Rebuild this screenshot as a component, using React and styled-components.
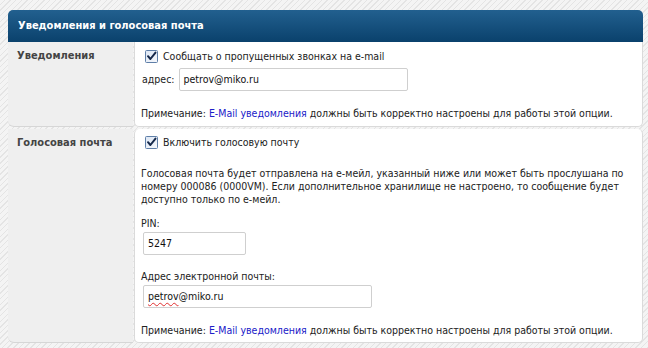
import React from 'react';
import styled, { createGlobalStyle } from 'styled-components';

const GlobalStyle = createGlobalStyle`
  html, body {
    margin: 0;
    padding: 0;
  }
  body {
    width: 648px;
    height: 348px;
    overflow: hidden;
    font-family: "DejaVu Sans Condensed", "DejaVu Sans", sans-serif;
    font-size: 11px;
    color: #222;
    background-color: #f4f4f4;
    background-image: repeating-linear-gradient(
      135deg,
      #f4f4f4 0px,
      #f4f4f4 3px,
      #e4e4e4 3px,
      #e4e4e4 4px
    );
  }
`;

const Page = styled.div`
  padding: 10px 5px 0 8px;
`;

const Header = styled.div`
  height: 32px;
  line-height: 32px;
  padding-left: 10px;
  border-radius: 5px 5px 0 0;
  background: linear-gradient(#22608f, #0a416c);
  color: #fff;
  font-weight: bold;
  font-size: 11px;
`;

const Row = styled.div`
  display: grid;
  grid-template-columns: 125px 1fr;
  column-gap: 1px;
  margin-bottom: 2px;
`;

const LabelCell = styled.div`
  background: #efefef;
  border-bottom: 1px solid #d6d6d6;
  border-radius: 0 0 0 6px;
  padding: 7px 9px;
  font-weight: bold;
  color: #444;
  line-height: 13px;
`;

const ContentCell = styled.div`
  background: #fff;
  border: 1px solid #dadada;
  border-top: none;
  border-radius: ${p => (p.$first ? '0 0 5px 5px' : '5px')};
  padding: ${p => (p.$first ? '7px 6px 6px 6px' : '6px 6px 5px 6px')};
  line-height: 13px;
  font-size: 10.5px;
`;

const CheckLine = styled.label`
  display: flex;
  align-items: center;
  gap: 5px;
  height: 14px;
  padding-left: 4px;
`;

const Box = styled.span`
  display: inline-flex;
  width: 13px;
  height: 13px;
`;

const FieldLine = styled.div`
  display: flex;
  align-items: center;
  gap: 4px;
  margin-top: ${p => p.$mt || 0}px;
`;

const Caption = styled.span`
  padding-left: 1px;
`;

const Field = styled.div`
  box-sizing: border-box;
  width: ${p => p.$w}px;
  height: 23px;
  line-height: 21px;
  padding: 0 4px;
  border: 1px solid #cfcfcf;
  border-radius: 2px;
  background: #fff;
  color: #111;
  margin-top: ${p => p.$mt || 0}px;
  margin-left: ${p => p.$ml || 0}px;
`;

const Misspelled = styled.span`
  text-decoration: underline wavy #e03030;
  text-decoration-thickness: 1px;
  text-underline-offset: 2px;
`;

const Text = styled.div`
  margin-top: ${p => p.$mt || 0}px;
`;

const Link = styled.a`
  color: #2020c8;
  text-decoration: none;
`;

function CheckBox() {
  return (
    <Box>
      <svg width="13" height="13" viewBox="0 0 13 13">
        <defs>
          <linearGradient id="cbg" x1="0" y1="0" x2="1" y2="1">
            <stop offset="0" stopColor="#dce6f4" />
            <stop offset="1" stopColor="#f6f8fc" />
          </linearGradient>
        </defs>
        <rect x="0.5" y="0.5" width="12" height="12" rx="1" fill="url(#cbg)" stroke="#5f7fa8" />
        <path d="M3 6.2 L5.4 9 L10.5 2.6" fill="none" stroke="#15284a" strokeWidth="2" strokeLinecap="round" strokeLinejoin="round" />
      </svg>
    </Box>
  );
}

function Note() {
  return (
    <>
      Примечание: <Link href="#">E-Mail уведомления</Link> должны быть корректно настроены для работы этой опции.
    </>
  );
}

export default function App() {
  return (
    <Page>
      <GlobalStyle />
      <Header>Уведомления и голосовая почта</Header>

      <Row>
        <LabelCell>Уведомления</LabelCell>
        <ContentCell $first>
          <CheckLine>
            <CheckBox />
            Сообщать о пропущенных звонках на e-mail
          </CheckLine>
          <FieldLine $mt={5}>
            <Caption>адрес:</Caption>
            <Field $w={229}>petrov@miko.ru</Field>
          </FieldLine>
          <Text $mt={16}>
            <Note />
          </Text>
        </ContentCell>
      </Row>

      <Row>
        <LabelCell>Голосовая почта</LabelCell>
        <ContentCell>
          <CheckLine>
            <CheckBox />
            Включить голосовую почту
          </CheckLine>
          <Text $mt={18}>
            Голосовая почта будет отправлена на е-мейл, указанный ниже или может быть прослушана по
            номеру 000086 (0000VM). Если дополнительное хранилище не настроено, то сообщение будет
            доступно только по е-мейл.
          </Text>
          <Text $mt={11}>PIN:</Text>
          <Field $w={103} $mt={2} $ml={2}>5247</Field>
          <Text $mt={15}>Адрес электронной почты:</Text>
          <Field $w={229} $mt={2} $ml={2}>
            <Misspelled>petrov</Misspelled>@miko.ru
          </Field>
          <Text $mt={16}>
            <Note />
          </Text>
        </ContentCell>
      </Row>
    </Page>
  );
}
